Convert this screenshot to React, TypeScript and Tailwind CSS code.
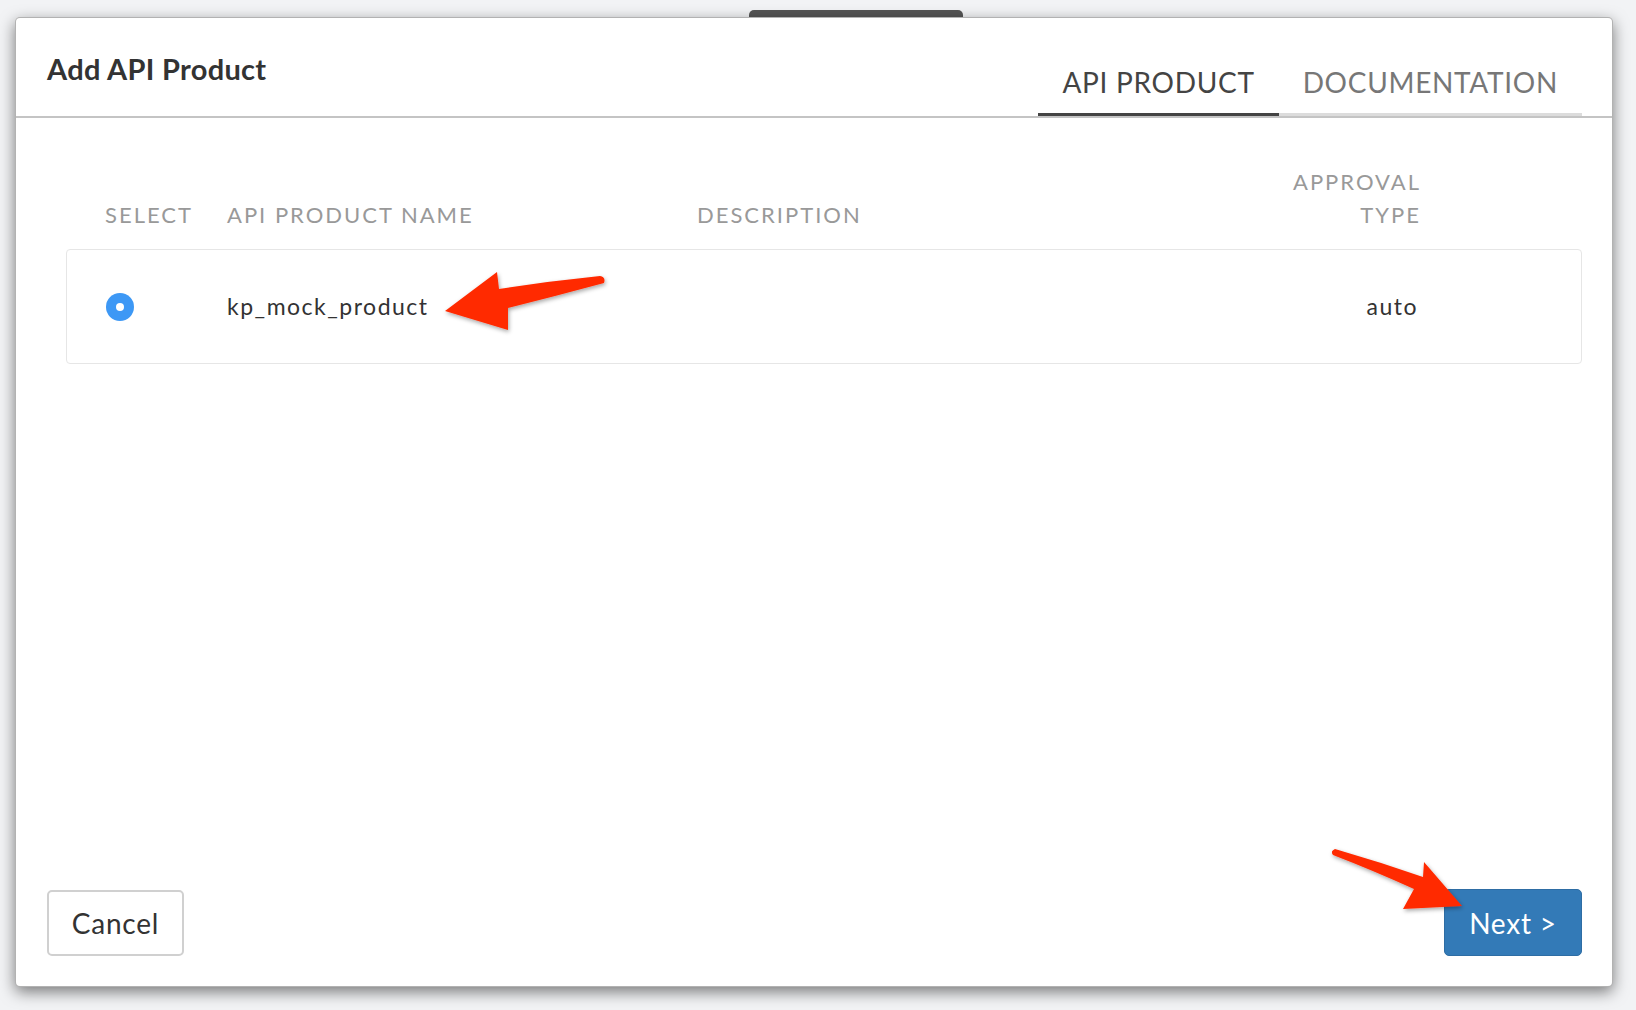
import React from "react";

const font = { fontFamily: "Lato, 'Open Sans', 'Liberation Sans', sans-serif" };

function Arrows() {
  return (
    <svg
      className="absolute left-0 top-0 pointer-events-none"
      width={1636}
      height={1010}
      viewBox="0 0 1636 1010"
    >
      <defs>
        <filter id="sh" x="-20%" y="-20%" width="140%" height="140%">
          <feDropShadow dx="1" dy="2" stdDeviation="2" floodColor="#000" floodOpacity="0.35" />
        </filter>
      </defs>
      <path
        d="M445 311 L497 272 L499 289 Q550 281 600 276 Q606 277 604 283 Q556 296 508 308 L508 330 Z"
        fill="#ff2a00"
        filter="url(#sh)"
      />
      <path
        d="M1335 849 Q1380 862 1423 877 L1424 862 L1462 906 L1403 909 L1414 889 Q1372 870 1333 855 Q1330 851 1335 849 Z"
        fill="#ff2a00"
        filter="url(#sh)"
      />
    </svg>
  );
}

export default function App() {
  return (
    <div
      className="relative w-[1636px] h-[1010px] overflow-hidden bg-[#f2f3f5] pt-[17px] pl-[15px]"
      style={font}
    >
      <div className="absolute left-[749px] top-[10px] w-[214px] h-[12px] rounded-t-[5px] bg-[#555]" />
      <div className="relative flex flex-col w-[1598px] h-[970px] bg-white border border-[rgba(0,0,0,0.3)] rounded-[5px] shadow-[0_5px_15px_rgba(0,0,0,0.5)]">
        {/* header */}
        <div className="flex h-[100px] justify-between border-b-2 border-[#c4c4c4] pl-[31px] pr-[30px]">
          <div className="pt-[36px] text-[29px] leading-[30px] font-bold text-[#333] tracking-[0.3px]">
            Add API Product
          </div>
          <div className="flex items-end">
            <div className="px-6 pb-[16px] border-b-[3px] border-[#444] text-[28px] leading-[30px] text-[#444] tracking-[0.7px]">
              API PRODUCT
            </div>
            <div className="px-6 pb-[16px] border-b-[3px] border-[#dcdcdc] text-[28px] leading-[30px] text-[#777] tracking-[0.7px]">
              DOCUMENTATION
            </div>
          </div>
        </div>

        {/* body */}
        <div className="pl-[50px] pr-[30px] pt-[47px]">
          <div className="flex items-end pl-[39px] pr-[161px] text-[22px] leading-[33px] text-[#999] tracking-[2px]">
            <div className="w-[122px]">SELECT</div>
            <div className="w-[470px]">API PRODUCT NAME</div>
            <div className="flex-1">DESCRIPTION</div>
            <div className="text-right">
              APPROVAL
              <br />
              TYPE
            </div>
          </div>
          <div className="mt-[18px] flex items-center h-[115px] border border-[#e6e6e6] rounded-[4px] pl-[39px] pr-[163px] text-[23px] text-[#333] tracking-[1.5px]">
            <div className="w-[121px] flex items-center">
              <div className="w-[28px] h-[28px] rounded-full bg-[#3d98f5] flex items-center justify-center">
                <div className="w-[8px] h-[8px] rounded-full bg-white" />
              </div>
            </div>
            <div className="w-[470px]">kp_mock_product</div>
            <div className="flex-1" />
            <div className="text-right">auto</div>
          </div>
        </div>

        {/* footer */}
        <div className="mt-auto flex justify-between items-end pl-[31px] pr-[30px] pb-[30px]">
          <button className="w-[137px] h-[66px] border-2 border-[#d0d0d0] rounded-[5px] bg-white text-[28px] text-[#333] tracking-[0.8px]">
            Cancel
          </button>
          <button className="w-[138px] h-[67px] border border-[#2e6da4] rounded-[5px] bg-[#337ab7] text-[28px] text-white tracking-[0.8px]">
            Next &gt;
          </button>
        </div>
      </div>
      <Arrows />
    </div>
  );
}
